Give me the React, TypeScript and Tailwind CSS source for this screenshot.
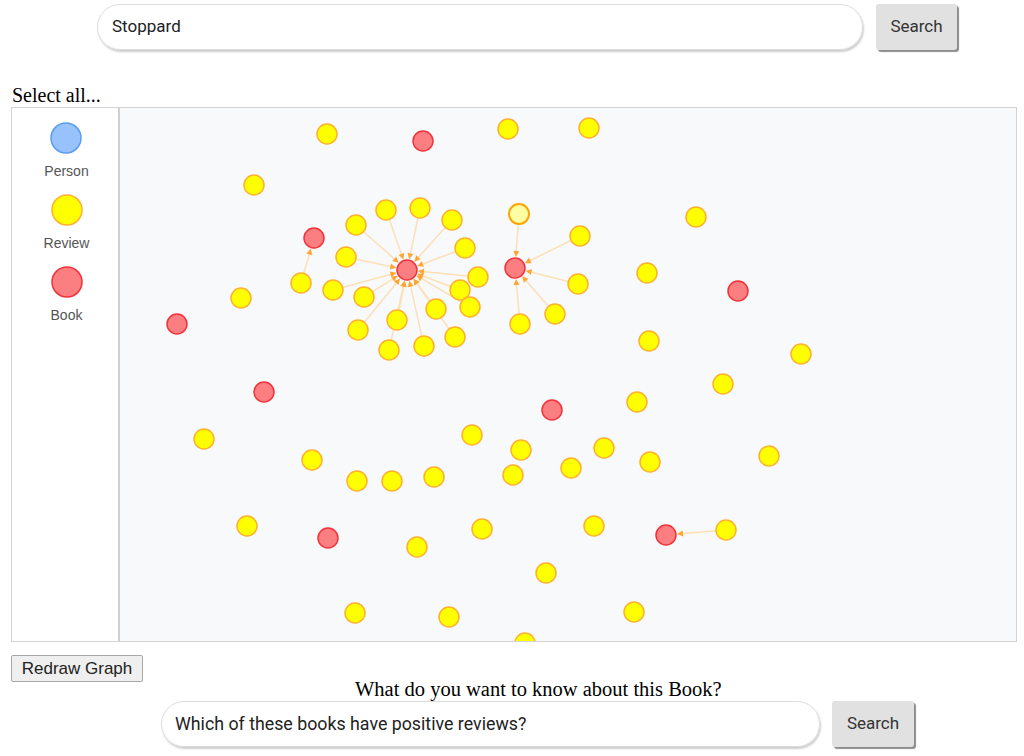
import React from "react";

type N = { x: number; y: number; t: "y" | "r" | "h" };

const yellows: [number, number][] = [
  [327, 134], [508, 129], [589, 128], [254, 185], [696, 217], [356, 225], [386, 210], [420, 208],
  [452, 220], [465, 248], [346, 257], [301, 283], [333, 290], [364, 297], [478, 277], [460, 290],
  [470, 307], [436, 309], [397, 320], [358, 330], [389, 350], [424, 346], [455, 337], [580, 236],
  [578, 284], [555, 314], [520, 324], [647, 273], [241, 298], [649, 341], [801, 354], [723, 384],
  [637, 402], [204, 439], [472, 435], [521, 450], [604, 448], [312, 460], [357, 481], [392, 481],
  [434, 477], [513, 475], [571, 468], [650, 462], [769, 456], [247, 526], [482, 529], [594, 526],
  [726, 530], [417, 547], [546, 573], [355, 613], [449, 617], [634, 612], [525, 643],
];
const reds: [number, number][] = [
  [423, 141], [314, 238], [407, 270], [515, 268], [738, 291], [177, 324], [264, 392], [552, 410],
  [328, 538], [666, 535],
];

const hub: [number, number] = [407, 270];
const hub2: [number, number] = [515, 268];
const hubSources: [number, number][] = [
  [356, 225], [386, 210], [420, 208], [452, 220], [465, 248], [346, 257], [333, 290], [364, 297],
  [478, 277], [460, 290], [470, 307], [436, 309], [397, 320], [358, 330], [389, 350], [424, 346],
  [455, 337],
];
const edges: [[number, number], [number, number]][] = [
  ...hubSources.map((s) => [s, hub] as [[number, number], [number, number]]),
  [[301, 283], [314, 238]],
  [[519, 214], hub2],
  [[580, 236], hub2],
  [[578, 284], hub2],
  [[555, 314], hub2],
  [[520, 324], hub2],
  [[726, 530], [666, 535]],
];

const OX = 120;
const OY = 108;
const R = 10;

function Edge({ s, t }: { s: [number, number]; t: [number, number] }) {
  const dx = t[0] - s[0];
  const dy = t[1] - s[1];
  const len = Math.hypot(dx, dy);
  const ux = dx / len;
  const uy = dy / len;
  const tipX = t[0] - ux * (R + 1);
  const tipY = t[1] - uy * (R + 1);
  const baseX = tipX - ux * 6;
  const baseY = tipY - uy * 6;
  const px = -uy * 3;
  const py = ux * 3;
  return (
    <g>
      <line x1={s[0]} y1={s[1]} x2={baseX} y2={baseY} stroke="#fbe0b8" strokeWidth={1.5} />
      <polygon
        points={`${tipX},${tipY} ${baseX + px},${baseY + py} ${baseX - px},${baseY - py}`}
        fill="#ffa531"
      />
    </g>
  );
}

function Node({ x, y, t }: N) {
  if (t === "r") return <circle cx={x} cy={y} r={R} fill="#fb7e81" stroke="#f2323a" strokeWidth={1.5} />;
  if (t === "h") return <circle cx={x} cy={y} r={R} fill="#ffffa3" stroke="#ffa500" strokeWidth={2} />;
  return <circle cx={x} cy={y} r={R} fill="#ffff00" stroke="#ffb02e" strokeWidth={1.5} />;
}

function LegendItem({ fill, stroke, label }: { fill: string; stroke: string; label: string }) {
  return (
    <div className="h-[72px] flex flex-col items-center">
      <svg width="34" height="34" viewBox="0 0 34 34">
        <circle cx="17" cy="17" r="15" fill={fill} stroke={stroke} strokeWidth="1.5" />
      </svg>
      <div
        className="text-[14px] leading-[18px] text-[#555] mt-[7px]"
        style={{ fontFamily: "Arial, 'Liberation Sans', sans-serif" }}
      >
        {label}
      </div>
    </div>
  );
}

export default function App() {
  const nodes: N[] = [
    ...yellows.map(([x, y]) => ({ x, y, t: "y" as const })),
    { x: 519, y: 214, t: "h" as const },
    ...reds.map(([x, y]) => ({ x, y, t: "r" as const })),
  ];
  return (
    <div className="w-[1024px] h-[756px] bg-white overflow-hidden" style={{ fontFamily: "Roboto, Arial, sans-serif" }}>
      <div className="flex items-center pt-[4px] pl-[97px] gap-[13px]">
        <div className="w-[766px] h-[46px] rounded-full border border-[#dcdcdc] shadow-[1px_2px_2px_rgba(0,0,0,0.2)] flex items-center pl-[14px] text-[17px] text-[#222]">
          Stoppard
        </div>
        <div className="w-[81px] h-[46px] rounded-[3px] bg-[#e1e1e1] shadow-[2px_2px_1px_rgba(0,0,0,0.45)] flex items-center justify-center text-[17px] text-[#333]">
          Search
        </div>
      </div>
      <div
        className="pl-[12px] mt-[34px] text-[20px] leading-[23px] text-black"
        style={{ fontFamily: "'Liberation Serif', 'Times New Roman', serif" }}
      >
        Select all...
      </div>
      <div className="ml-[11px] w-[1006px] h-[535px] border border-[#d3d3d3] flex">
        <div className="w-[108px] shrink-0 border-r-2 border-[#d0d0d0] flex flex-col items-center pt-[13px] pl-[3px] bg-white">
          <LegendItem fill="#97c2fc" stroke="#5b9cf0" label="Person" />
          <LegendItem fill="#ffff00" stroke="#ffb02e" label="Review" />
          <LegendItem fill="#fb7e81" stroke="#f2323a" label="Book" />
        </div>
        <div className="flex-1 bg-[#f8f9fa] overflow-hidden">
          <svg width="896" height="533" viewBox={`${OX} ${OY} 896 533`} className="block">
            {edges.map(([s, t], i) => (
              <Edge key={i} s={s} t={t} />
            ))}
            {nodes.map((n, i) => (
              <Node key={i} {...n} />
            ))}
          </svg>
        </div>
      </div>
      <div
        className="ml-[11px] mt-[13px] w-[132px] h-[27px] border border-[#a8a8a8] bg-[#efefef] rounded-[2px] flex items-center justify-center text-[17px] text-[#222]"
        style={{ fontFamily: "Arial, 'Liberation Sans', sans-serif" }}
      >
        Redraw Graph
      </div>
      <div
        className="pl-[355px] text-[20.5px] leading-[22px] text-black -mt-[4px]"
        style={{ fontFamily: "'Liberation Serif', 'Times New Roman', serif" }}
      >
        What do you want to know about this Book?
      </div>
      <div className="flex items-center pl-[161px] gap-[12px] mt-[1px]">
        <div className="w-[659px] h-[46px] rounded-full border border-[#dcdcdc] shadow-[1px_2px_2px_rgba(0,0,0,0.2)] flex items-center pl-[13px] text-[17.8px] text-[#222]">
          Which of these books have positive reviews?
        </div>
        <div className="w-[82px] h-[46px] rounded-[3px] bg-[#e1e1e1] shadow-[2px_2px_1px_rgba(0,0,0,0.45)] flex items-center justify-center text-[17px] text-[#333]">
          Search
        </div>
      </div>
    </div>
  );
}
